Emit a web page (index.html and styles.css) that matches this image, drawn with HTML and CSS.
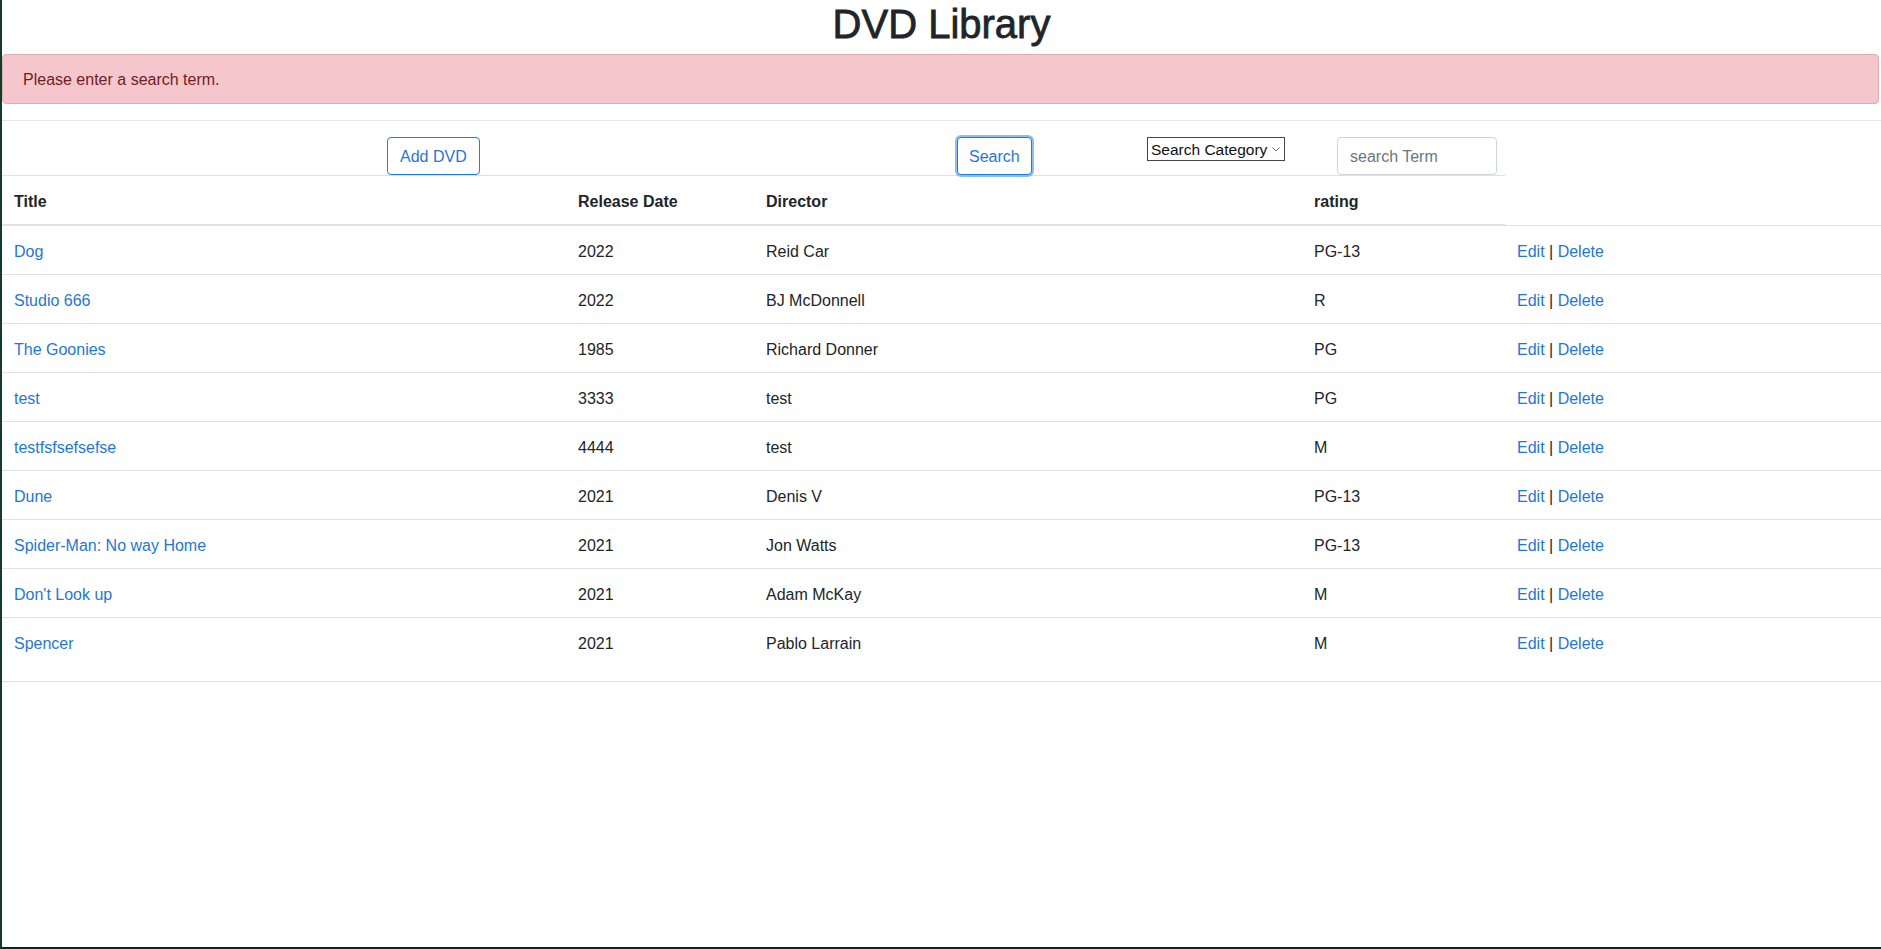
FILE: index.html
```html
<!DOCTYPE html>
<html lang="en">
<head>
<meta charset="utf-8">
<title>DVD Library</title>
<link rel="stylesheet" href="styles.css">
</head>
<body>
<div class="page">
  <h1 class="title">DVD Library</h1>
  <div class="alert">Please enter a search term.</div>
  <hr class="rule">
  <div class="controls">
    <button class="btn btn-add" type="button">Add DVD</button>
    <button class="btn btn-search" type="button">Search</button>
    <div class="select-wrap">
      <select class="category"><option>Search Category</option></select>
      <svg class="chev" width="8" height="5" viewBox="0 0 8 5"><path d="M0.5 0.5 L4 4 L7.5 0.5" fill="none" stroke="#6b6b6b" stroke-width="1"/></svg>
    </div>
    <input class="term" type="text" placeholder="search Term">
  </div>
  <table class="dvds">
    <colgroup>
      <col class="c-title"><col class="c-date"><col class="c-dir"><col class="c-rating"><col class="c-actions">
    </colgroup>
    <thead>
      <tr><th>Title</th><th>Release Date</th><th>Director</th><th>rating</th></tr>
    </thead>
    <tbody>
      <tr><td><a href="#">Dog</a></td><td>2022</td><td>Reid Car</td><td>PG-13</td><td><a href="#">Edit</a> | <a href="#">Delete</a></td></tr>
      <tr><td><a href="#">Studio 666</a></td><td>2022</td><td>BJ McDonnell</td><td>R</td><td><a href="#">Edit</a> | <a href="#">Delete</a></td></tr>
      <tr><td><a href="#">The Goonies</a></td><td>1985</td><td>Richard Donner</td><td>PG</td><td><a href="#">Edit</a> | <a href="#">Delete</a></td></tr>
      <tr><td><a href="#">test</a></td><td>3333</td><td>test</td><td>PG</td><td><a href="#">Edit</a> | <a href="#">Delete</a></td></tr>
      <tr><td><a href="#">testfsfsefsefse</a></td><td>4444</td><td>test</td><td>M</td><td><a href="#">Edit</a> | <a href="#">Delete</a></td></tr>
      <tr><td><a href="#">Dune</a></td><td>2021</td><td>Denis V</td><td>PG-13</td><td><a href="#">Edit</a> | <a href="#">Delete</a></td></tr>
      <tr><td><a href="#">Spider-Man: No way Home</a></td><td>2021</td><td>Jon Watts</td><td>PG-13</td><td><a href="#">Edit</a> | <a href="#">Delete</a></td></tr>
      <tr><td><a href="#">Don't Look up</a></td><td>2021</td><td>Adam McKay</td><td>M</td><td><a href="#">Edit</a> | <a href="#">Delete</a></td></tr>
      <tr><td><a href="#">Spencer</a></td><td>2021</td><td>Pablo Larrain</td><td>M</td><td><a href="#">Edit</a> | <a href="#">Delete</a></td></tr>
    </tbody>
  </table>
</div>
</body>
</html>
```

FILE: styles.css
```css
* { box-sizing: border-box; }

html, body {
  margin: 0;
  padding: 0;
}

body {
  font-family: "Liberation Sans", Arial, sans-serif;
  font-size: 16px;
  line-height: 1.5;
  color: #212529;
  background: #ffffff;
}

.page {
  height: 949px;
  overflow: hidden;
  border-left: 2px solid #123b2c;
  border-bottom: 2px solid #15231f;
}

.title {
  margin: 0 0 8px;
  padding-top: 1px;
  height: 46px;
  font-size: 40px;
  font-weight: normal;
  -webkit-text-stroke: 0.8px #212529;
  line-height: 46px;
  text-align: center;
  color: #212529;
}

.alert {
  margin: 0 2px 16px 0;
  padding: 13px 20px 11px;
  border: 1px solid #deb0b6;
  border-radius: 4px;
  background: #f5c6cb;
  color: #721c24;
}

.rule {
  margin: 0 0 16px;
  height: 0;
  border: 0;
  border-top: 1px solid #e6e6e6;
}

.controls {
  display: grid;
  grid-template-columns: repeat(8, 190px);
  align-items: start;
  height: 38px;
  padding-left: 5px;
}

.btn {
  font: inherit;
  line-height: 24px;
  padding: 7px 12px 5px;
  border: 1px solid #1a7cf0;
  border-radius: 4px;
  background: #ffffff;
  color: #1f76d8;
  justify-self: start;
}

.btn-add { grid-column: 3; }

.btn-search {
  grid-column: 6;
  padding-left: 11px;
  padding-right: 11px;
  box-shadow: 0 0 0 2px #8dbdf6;
}

.select-wrap {
  grid-column: 7;
  position: relative;
  width: 138px;
  height: 24px;
}

.category {
  appearance: none;
  -webkit-appearance: none;
  width: 138px;
  height: 24px;
  margin: 0;
  padding: 1px 16px 0 3px;
  border: 1px solid #444444;
  border-radius: 0;
  background: #ffffff;
  color: #111111;
  font-family: "Liberation Sans", Arial, sans-serif;
  font-size: 15.5px;
}

.chev {
  position: absolute;
  right: 5px;
  top: 10px;
  pointer-events: none;
}

.term {
  grid-column: 8;
  width: 160px;
  height: 38px;
  margin: 0;
  padding: 7px 12px 5px;
  border: 1px solid #ced4da;
  border-radius: 4px;
  font: inherit;
  color: #495057;
  background: #ffffff;
}

.term::placeholder { color: #6c757d; }

.dvds {
  width: 100%;
  table-layout: fixed;
  border-collapse: collapse;
}

.c-title { width: 564px; }
.c-date { width: 188px; }
.c-dir { width: 548px; }
.c-rating { width: 203px; }
.c-actions { width: 376px; }

.dvds th,
.dvds td {
  padding: 14px 12px 10px;
  text-align: left;
  vertical-align: top;
  border-top: 1px solid #dee2e6;
}

.dvds th {
  font-weight: bold;
  border-bottom: 2px solid #dee2e6;
}

.dvds tbody tr:last-child td {
  padding-bottom: 25px;
  border-bottom: 1px solid #dee2e6;
}

.dvds a {
  color: #1f76d8;
  text-decoration: none;
}
```
